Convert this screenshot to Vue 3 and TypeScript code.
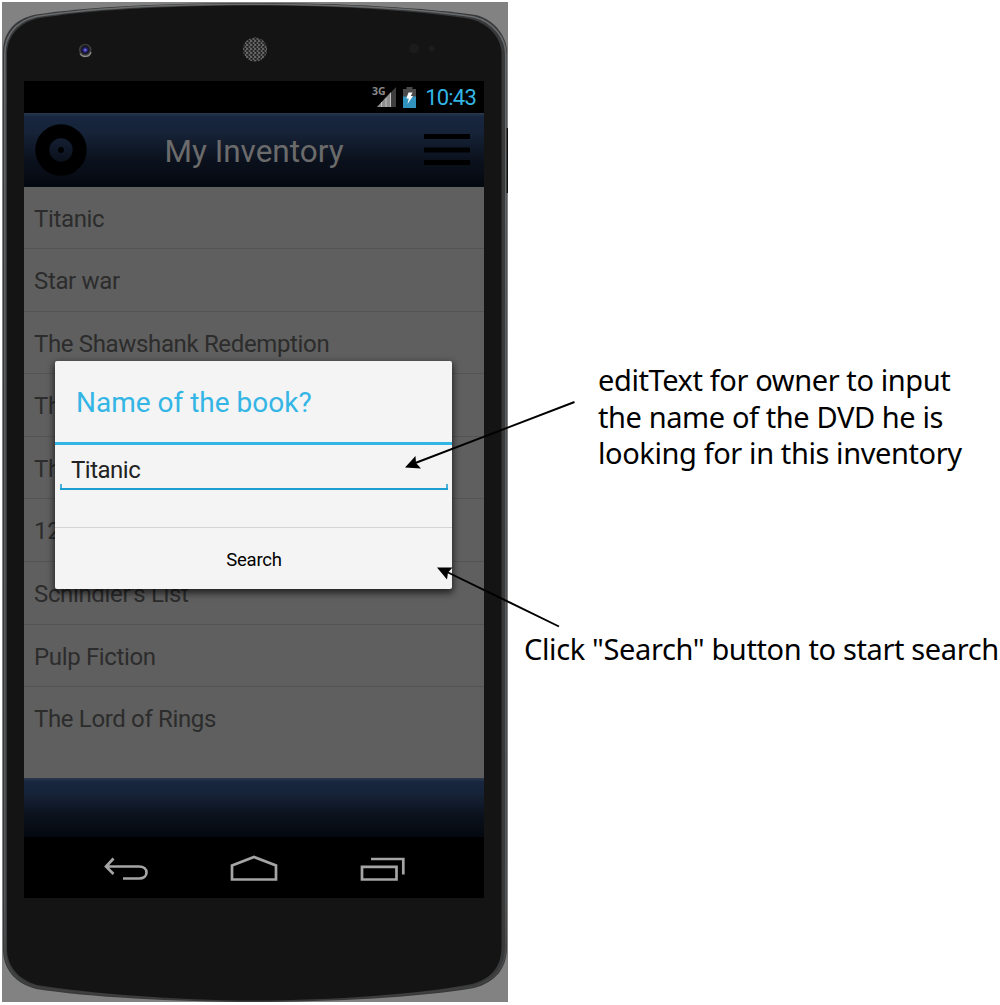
<script setup lang="ts">
const films: string[] = [
  'Titanic',
  'Star war',
  'The Shawshank Redemption',
  'Th',
  'Th',
  '12',
  "Schindler's List",
  'Pulp Fiction',
  'The Lord of Rings',
]

const noteLines: string[] = [
  'editText for owner to input',
  'the name of the DVD he is',
  'looking for in this inventory',
]
</script>

<template>
  <main class="page">
    <section class="phone">
      <svg class="frame" viewBox="0 0 506 1000" aria-hidden="true">
        <defs>
          <linearGradient id="rim" x1="0" y1="0" x2="0" y2="1">
            <stop offset="0" stop-color="#6a6b6d" />
            <stop offset="0.3" stop-color="#5e5f61" />
            <stop offset="0.9" stop-color="#555657" />
            <stop offset="1" stop-color="#3c3c3c" />
          </linearGradient>
          <pattern id="mesh" width="4" height="4" patternUnits="userSpaceOnUse">
            <rect width="4" height="4" fill="#646464" />
            <rect x="0.4" y="0.2" width="2.3" height="1.4" fill="#0c0c0c" />
            <rect x="2.2" y="2.2" width="2" height="1.4" fill="#0c0c0c" />
          </pattern>
          <radialGradient id="lens">
            <stop offset="0" stop-color="#8f96e0" />
            <stop offset="0.5" stop-color="#2f2a98" />
            <stop offset="1" stop-color="#101020" />
          </radialGradient>
        </defs>
        <path
          fill="#38393a"
          d="M1 50C1 32 11 17 34 12.500C85 5 160 1 252 1S425 6 474 13C494 18 505 36 505 50V945C505 966 494 980 472 986C420 995 330 1000 252 1000S85 995 34 987C12 981 1 966 1 947Z"
        />
        <path
          fill="none"
          stroke="url(#rim)"
          stroke-width="1.600"
          d="M2.800 52C2.800 35 12 20 34 14.500C85 6.500 160 2.200 252 2.200S425 7.500 472 15C492 20 503.800 37 503.800 52V945C503.800 965 493 978 472 984C420 993 330 998 252 998S85 993 34 985C13 979 2.800 965 2.800 947Z"
        />
        <path
          fill="#141414"
          d="M5 52C5 37 14 22 35 16.500C85 8.500 160 3.500 252 3.500S423 9.500 468 17C489 22 499.500 38 499.500 52V945C499.500 963 491 976 470 982C420 992 330 998.500 252 998.500S85 991 35 983C15 977 5 963 5 947Z"
        />
        <rect x="504.700" y="126" width="1.300" height="65" fill="#0d0d0d" />
        <circle cx="83.200" cy="48" r="6.300" fill="#3c3c3c" />
        <path d="M78 51.500A6 6 0 0 0 89 50" fill="none" stroke="#8a8a8a" stroke-width="1.300" />
        <circle cx="83.200" cy="47.700" r="4.600" fill="#1c1c24" />
        <circle cx="83.200" cy="48" r="3.400" fill="url(#lens)" />
        <circle cx="253" cy="47.500" r="12" fill="url(#mesh)" />
        <circle cx="412" cy="46.500" r="5" fill="#1b1b1b" />
        <circle cx="429.500" cy="46.500" r="3" fill="#1d1d1d" />
      </svg>

      <div class="screen">
        <div class="status">
          <svg class="signal" width="26" height="22" viewBox="0 0 26 22">
            <path d="M25 1V21H6Z" fill="#3e3e3e" />
            <path d="M20 6V21H6Z" fill="#8e8e8e" />
            <path d="M10.500 16V21M15 12V21M19.500 7V21" stroke="#c0c0c0" stroke-width="1" />
            <text x="1" y="9" class="network">3G</text>
          </svg>
          <svg class="battery" width="13" height="21" viewBox="0 0 13 21">
            <path d="M3.500 0H9.500V2H13V10H0V2H3.500Z" fill="#4a4a4a" />
            <rect y="9.500" width="13" height="11.500" fill="#3193bd" />
            <path d="M5.500 5.500H9.500L7.800 9H10L4.500 17L5.800 11.500H3.300Z" fill="#fff" />
          </svg>
          <span class="clock">10:43</span>
        </div>

        <header class="bar">
          <svg class="disc" width="52" height="52" viewBox="0 0 52 52">
            <circle cx="26" cy="26" r="18.700" fill="none" stroke="#000" stroke-width="14" />
            <circle cx="26" cy="26" r="3" fill="#000" />
          </svg>
          <h1>My Inventory</h1>
          <svg class="menu" width="46" height="32" viewBox="0 0 46 32">
            <path d="M0 2.500H46M0 16H46M0 28.500H46" stroke="#000" stroke-width="5" />
          </svg>
        </header>

        <ul class="films">
          <li v-for="(film, index) in films" :key="index">{{ film }}</li>
        </ul>

        <footer class="bar foot"></footer>

        <nav class="keys">
          <svg width="44" height="28" viewBox="0 0 44 28">
            <path d="M2 12.500H35C45 12.500 45 24.500 35 24.500H19M9.500 4.500L2 12.500L9.500 20" />
          </svg>
          <svg width="48" height="28" viewBox="0 0 48 28">
            <path d="M2 11.500L24 3L46 11.500V25.500H2Z" />
          </svg>
          <svg width="46" height="28" viewBox="0 0 46 28">
            <path d="M2 12.800H36.500V25.500H2ZM11 5H43.300V20.500" />
          </svg>
        </nav>

        <div class="dialog" role="dialog">
          <h2>Name of the book?</h2>
          <div class="body">
            <div class="field">Titanic</div>
          </div>
          <button type="button">Search</button>
        </div>
      </div>
    </section>

    <aside class="notes">
      <p class="note-edit">
        <span v-for="line in noteLines" :key="line">{{ line }}</span>
      </p>
      <p class="note-search">Click "Search" button to start search</p>
    </aside>

    <svg class="arrows" viewBox="0 0 1000 1005" aria-hidden="true">
      <path d="M574.500 402L414 463.500M559 626.500L446 571.500" stroke="#000" stroke-width="1.900" />
      <path d="M405 467.500L415.500 456L416 463L421 468.500Z" />
      <path d="M437 567.500L452.500 567.500L448 572.500L447 579.500Z" />
    </svg>
  </main>
</template>

<style>
body {
  margin: 0;
  background: #fff;
}
</style>

<style scoped>
.page {
  position: relative;
  display: flex;
  width: 1000px;
  height: 1005px;
  overflow: hidden;
  font-family: Roboto, sans-serif;
}
.phone {
  position: relative;
  flex: none;
  box-sizing: border-box;
  width: 506px;
  height: 1000px;
  margin: 2px 0 0 2px;
  padding: 79px 24px 0 22px;
  background: #828282;
}
.frame {
  position: absolute;
  inset: 0;
  width: 506px;
  height: 1000px;
}
.screen {
  position: relative;
  display: flex;
  flex-direction: column;
  width: 460px;
  height: 817px;
  background: #000;
}
.status {
  display: flex;
  align-items: center;
  justify-content: flex-end;
  height: 32px;
  padding-right: 8px;
}
.network {
  font: 700 10.500px 'Open Sans', sans-serif;
  fill: #8a8a8a;
}
.signal {
  margin-right: 6px;
  overflow: visible;
}
.battery {
  margin-right: 9px;
}
.clock {
  padding-top: 2px;
  color: #33b5e5;
  font-size: 22px;
  letter-spacing: -0.8px;
  line-height: 32px;
}
.bar {
  display: flex;
  align-items: center;
  justify-content: space-between;
  box-sizing: border-box;
  height: 74px;
  padding: 0 14px 0 11px;
  background: linear-gradient(#2b384c 0, #17263f 4px, #162339 25%, #0b111c 65%, #04080f 100%);
}
.bar h1 {
  margin: 0;
  padding: 3px 3px 0 0;
  color: #6b6b6b;
  font-size: 31.500px;
  font-weight: 400;
  line-height: 71px;
}
.films {
  box-sizing: border-box;
  height: 591px;
  margin: 0;
  padding: 0;
  background: #5f5f5f;
  list-style: none;
}
.films li {
  box-sizing: border-box;
  height: 62.600px;
  padding-left: 10px;
  border-bottom: 1px solid #535353;
  color: #2c2c2c;
  font-size: 24px;
  letter-spacing: -0.350px;
  line-height: 64px;
}
.films li:first-child {
  height: 62px;
}
.films li:last-child {
  border-bottom: 0;
}
.foot {
  height: 59px;
}
.keys {
  display: flex;
  align-items: center;
  justify-content: space-between;
  height: 61px;
  padding: 0 78px 0 80px;
}
.keys path {
  fill: none;
  stroke: #a5a5a5;
  stroke-width: 2.700;
}
.dialog {
  position: absolute;
  top: 280px;
  left: 31px;
  display: flex;
  flex-direction: column;
  width: 397px;
  height: 228px;
  border-radius: 2px;
  background: #f4f4f4;
  box-shadow: 0 3px 7px 1px rgba(0, 0, 0, 0.65);
}
.dialog h2 {
  box-sizing: border-box;
  height: 84px;
  margin: 0;
  padding-left: 21px;
  border-bottom: 3px solid #33b5e5;
  color: #33b5e5;
  font-size: 28px;
  font-weight: 400;
  line-height: 84px;
}
.body {
  box-sizing: border-box;
  height: 83px;
  padding: 0 4px 0 5px;
  border-bottom: 1px solid #d4d4d4;
}
.field {
  position: relative;
  height: 43px;
  padding-left: 11px;
  border-bottom: 2px solid #1c9fd0;
  color: #222;
  font-size: 24px;
  letter-spacing: -0.500px;
  line-height: 50px;
}
.field::before,
.field::after {
  position: absolute;
  bottom: 0;
  width: 2px;
  height: 4px;
  background: #48b2da;
  content: '';
}
.field::before {
  left: 0;
}
.field::after {
  right: 0;
}
.dialog button {
  height: 61px;
  padding: 3px 0 0 1px;
  border: 0;
  background: none;
  color: #000;
  font: 18.500px/58px Roboto, sans-serif;
  letter-spacing: -0.250px;
}
.notes {
  flex: none;
  width: 480px;
  padding-left: 16px;
  color: #000;
  font: 29px/36.500px 'Noto Sans', sans-serif;
  letter-spacing: -0.400px;
  white-space: nowrap;
}
.note-edit {
  display: flex;
  flex-direction: column;
  margin: 362px 0 0 74px;
}
.note-search {
  margin: 159.500px 0 0;
  letter-spacing: -0.370px;
}
.arrows {
  position: absolute;
  inset: 0;
  width: 1000px;
  height: 1005px;
}
</style>
